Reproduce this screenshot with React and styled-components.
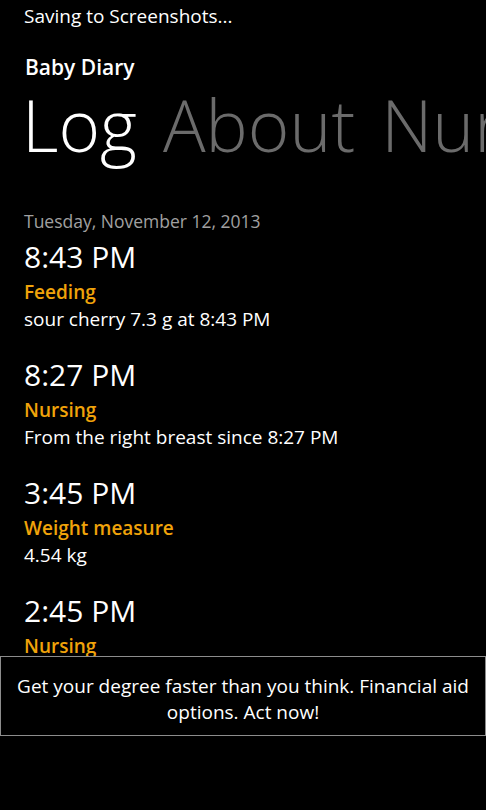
import React from "react";
import styled, { createGlobalStyle } from "styled-components";

const Global = createGlobalStyle`
  html, body { margin: 0; padding: 0; background: #000; }
  body { font-family: "Open Sans", "Noto Sans", sans-serif; color: #fff; }
`;

const Screen = styled.div`
  width: 486px;
  height: 810px;
  background: #000;
  overflow: hidden;
  display: flex;
  flex-direction: column;
`;

const StatusBar = styled.div`
  height: 32px;
  padding-left: 24px;
  font-size: 19px;
  line-height: 32px;
  color: #fff;
`;

const AppTitle = styled.div`
  margin-top: 21px;
  padding-left: 25px;
  font-size: 21px;
  font-weight: 600;
  line-height: 28px;
`;

const Pivot = styled.div`
  display: flex;
  gap: 26px;
  padding-left: 22px;
  margin-top: 2px;
  white-space: nowrap;
  font-size: 71px;
  font-weight: 300;
  line-height: 84px;
`;

const PivotItem = styled.span`
  color: ${(p) => (p.$active ? "#ffffff" : "#6b6b6b")};
`;

const List = styled.div`
  flex: 0 0 auto;
  height: 489px;
  overflow: hidden;
  padding-left: 24px;
`;

const DateHeader = styled.div`
  font-size: 17.5px;
  line-height: 24px;
  color: #a0a0a0;
  margin-top: 42px;
  margin-bottom: 2px;
`;

const Entry = styled.div`
  display: flex;
  flex-direction: column;
  height: 118px;
`;

const Time = styled.div`
  font-size: 30px;
  line-height: 43px;
  font-weight: 400;
`;

const Kind = styled.div`
  font-size: 19px;
  font-weight: 600;
  line-height: 28px;
  color: #f0a30a;
`;

const Detail = styled.div`
  font-size: 19px;
  line-height: 26px;
  color: #fff;
`;

const Ad = styled.div`
  box-sizing: border-box;
  height: 80px;
  border: 1px solid #8c8c8c;
  display: flex;
  align-items: center;
  justify-content: center;
  text-align: center;
  padding: 5px 12px 0;
  font-size: 19px;
  line-height: 26px;
  color: #fff;
`;

const entries = [
  { time: "8:43 PM", kind: "Feeding", detail: "sour cherry 7.3 g at 8:43 PM" },
  { time: "8:27 PM", kind: "Nursing", detail: "From the right breast since 8:27 PM" },
  { time: "3:45 PM", kind: "Weight measure", detail: "4.54 kg" },
  { time: "2:45 PM", kind: "Nursing", detail: "" },
];

export default function App() {
  return (
    <>
      <Global />
      <Screen>
        <StatusBar>Saving to Screenshots...</StatusBar>
        <AppTitle>Baby Diary</AppTitle>
        <Pivot>
          <PivotItem $active>Log</PivotItem>
          <PivotItem>About</PivotItem>
          <PivotItem>Nursing</PivotItem>
        </Pivot>
        <List>
          <DateHeader>Tuesday, November 12, 2013</DateHeader>
          {entries.map((e, i) => (
            <Entry key={i}>
              <Time>{e.time}</Time>
              <Kind>{e.kind}</Kind>
              {e.detail && <Detail>{e.detail}</Detail>}
            </Entry>
          ))}
        </List>
        <Ad>Get your degree faster than you think. Financial aid options. Act now!</Ad>
      </Screen>
    </>
  );
}
